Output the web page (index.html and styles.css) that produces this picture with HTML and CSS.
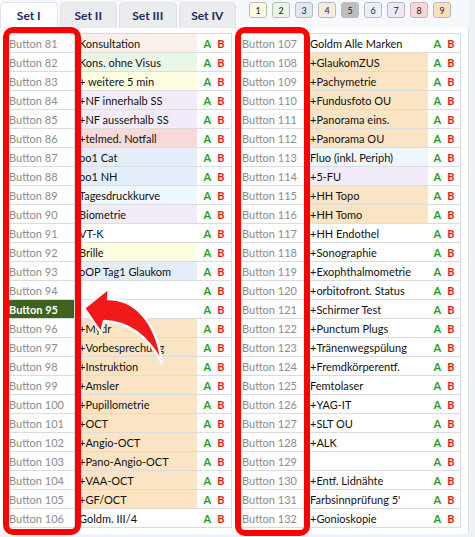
FILE: index.html
```html
<!DOCTYPE html>
<html lang="de">
<head>
<meta charset="utf-8">
<title>Buttons</title>
<link rel="stylesheet" href="styles.css">
</head>
<body>
<div class="app">
  <div class="col col-left">
    <div class="tabs">
      <div class="tab active">Set I</div>
      <div class="tab">Set II</div>
      <div class="tab">Set III</div>
      <div class="tab">Set IV</div>
    </div>
    <div class="panel panel-left">
      <div class="grid grid-left">
        <div class="row"><div class="c1">Button 81</div><div class="c2 bg-peach">Konsultation</div><div class="c3"><span class="a">A</span><span class="b">B</span></div></div>
        <div class="row"><div class="c1">Button 82</div><div class="c2 bg-green">Kons. ohne Visus</div><div class="c3"><span class="a">A</span><span class="b">B</span></div></div>
        <div class="row"><div class="c1">Button 83</div><div class="c2 bg-yellow">+ weitere 5 min</div><div class="c3"><span class="a">A</span><span class="b">B</span></div></div>
        <div class="row"><div class="c1">Button 84</div><div class="c2 bg-lav">+NF innerhalb SS</div><div class="c3"><span class="a">A</span><span class="b">B</span></div></div>
        <div class="row"><div class="c1">Button 85</div><div class="c2 bg-lav">+NF ausserhalb SS</div><div class="c3"><span class="a">A</span><span class="b">B</span></div></div>
        <div class="row"><div class="c1">Button 86</div><div class="c2 bg-pink">+telmed. Notfall</div><div class="c3"><span class="a">A</span><span class="b">B</span></div></div>
        <div class="row"><div class="c1">Button 87</div><div class="c2 bg-blue">oo1 Cat</div><div class="c3"><span class="a">A</span><span class="b">B</span></div></div>
        <div class="row"><div class="c1">Button 88</div><div class="c2 bg-blue">oo1 NH</div><div class="c3"><span class="a">A</span><span class="b">B</span></div></div>
        <div class="row"><div class="c1">Button 89</div><div class="c2 bg-sky">Tagesdruckkurve</div><div class="c3"><span class="a">A</span><span class="b">B</span></div></div>
        <div class="row"><div class="c1">Button 90</div><div class="c2 bg-lav">Biometrie</div><div class="c3"><span class="a">A</span><span class="b">B</span></div></div>
        <div class="row"><div class="c1">Button 91</div><div class="c2">VT-K</div><div class="c3"><span class="a">A</span><span class="b">B</span></div></div>
        <div class="row"><div class="c1">Button 92</div><div class="c2 bg-yellow">Brille</div><div class="c3"><span class="a">A</span><span class="b">B</span></div></div>
        <div class="row"><div class="c1">Button 93</div><div class="c2 bg-blue">oOP Tag1 Glaukom</div><div class="c3"><span class="a">A</span><span class="b">B</span></div></div>
        <div class="row"><div class="c1">Button 94</div><div class="c2"></div><div class="c3"><span class="a">A</span><span class="b">B</span></div></div>
        <div class="row"><div class="c1 selected">Button 95</div><div class="c2"></div><div class="c3"><span class="a">A</span><span class="b">B</span></div></div>
        <div class="row"><div class="c1">Button 96</div><div class="c2 bg-orange">+Mydr</div><div class="c3"><span class="a">A</span><span class="b">B</span></div></div>
        <div class="row"><div class="c1">Button 97</div><div class="c2 bg-orange">+Vorbesprechung</div><div class="c3"><span class="a">A</span><span class="b">B</span></div></div>
        <div class="row"><div class="c1">Button 98</div><div class="c2 bg-orange">+Instruktion</div><div class="c3"><span class="a">A</span><span class="b">B</span></div></div>
        <div class="row"><div class="c1">Button 99</div><div class="c2 bg-orange">+Amsler</div><div class="c3"><span class="a">A</span><span class="b">B</span></div></div>
        <div class="row"><div class="c1">Button 100</div><div class="c2 bg-orange">+Pupillometrie</div><div class="c3"><span class="a">A</span><span class="b">B</span></div></div>
        <div class="row"><div class="c1">Button 101</div><div class="c2 bg-orange">+OCT</div><div class="c3"><span class="a">A</span><span class="b">B</span></div></div>
        <div class="row"><div class="c1">Button 102</div><div class="c2 bg-orange">+Angio-OCT</div><div class="c3"><span class="a">A</span><span class="b">B</span></div></div>
        <div class="row"><div class="c1">Button 103</div><div class="c2 bg-orange">+Pano-Angio-OCT</div><div class="c3"><span class="a">A</span><span class="b">B</span></div></div>
        <div class="row"><div class="c1">Button 104</div><div class="c2 bg-orange">+VAA-OCT</div><div class="c3"><span class="a">A</span><span class="b">B</span></div></div>
        <div class="row"><div class="c1">Button 105</div><div class="c2 bg-orange">+GF/OCT</div><div class="c3"><span class="a">A</span><span class="b">B</span></div></div>
        <div class="row"><div class="c1">Button 106</div><div class="c2">Goldm. III/4</div><div class="c3"><span class="a">A</span><span class="b">B</span></div></div>
      </div>
    </div>
  </div>
  <div class="col col-right">
    <div class="numbers">
      <div class="num n1">1</div>
      <div class="num n2">2</div>
      <div class="num n3">3</div>
      <div class="num n4">4</div>
      <div class="num n5">5</div>
      <div class="num n6">6</div>
      <div class="num n7">7</div>
      <div class="num n8">8</div>
      <div class="num n9">9</div>
    </div>
    <div class="panel panel-right">
      <div class="grid grid-right">
        <div class="row"><div class="c1">Button 107</div><div class="c2">Goldm Alle Marken</div><div class="c3"><span class="a">A</span><span class="b">B</span></div></div>
        <div class="row"><div class="c1">Button 108</div><div class="c2 bg-orange">+GlaukomZUS</div><div class="c3"><span class="a">A</span><span class="b">B</span></div></div>
        <div class="row"><div class="c1">Button 109</div><div class="c2 bg-orange">+Pachymetrie</div><div class="c3"><span class="a">A</span><span class="b">B</span></div></div>
        <div class="row"><div class="c1">Button 110</div><div class="c2 bg-orange">+Fundusfoto OU</div><div class="c3"><span class="a">A</span><span class="b">B</span></div></div>
        <div class="row"><div class="c1">Button 111</div><div class="c2 bg-orange">+Panorama eins.</div><div class="c3"><span class="a">A</span><span class="b">B</span></div></div>
        <div class="row"><div class="c1">Button 112</div><div class="c2 bg-orange">+Panorama OU</div><div class="c3"><span class="a">A</span><span class="b">B</span></div></div>
        <div class="row"><div class="c1">Button 113</div><div class="c2 bg-sky">Fluo (inkl. Periph)</div><div class="c3"><span class="a">A</span><span class="b">B</span></div></div>
        <div class="row"><div class="c1">Button 114</div><div class="c2 bg-lav">+5-FU</div><div class="c3"><span class="a">A</span><span class="b">B</span></div></div>
        <div class="row"><div class="c1">Button 115</div><div class="c2 bg-orange">+HH Topo</div><div class="c3"><span class="a">A</span><span class="b">B</span></div></div>
        <div class="row"><div class="c1">Button 116</div><div class="c2 bg-orange">+HH Tomo</div><div class="c3"><span class="a">A</span><span class="b">B</span></div></div>
        <div class="row"><div class="c1">Button 117</div><div class="c2">+HH Endothel</div><div class="c3"><span class="a">A</span><span class="b">B</span></div></div>
        <div class="row"><div class="c1">Button 118</div><div class="c2">+Sonographie</div><div class="c3"><span class="a">A</span><span class="b">B</span></div></div>
        <div class="row"><div class="c1">Button 119</div><div class="c2">+Exophthalmometrie</div><div class="c3"><span class="a">A</span><span class="b">B</span></div></div>
        <div class="row"><div class="c1">Button 120</div><div class="c2">+orbitofront. Status</div><div class="c3"><span class="a">A</span><span class="b">B</span></div></div>
        <div class="row"><div class="c1">Button 121</div><div class="c2">+Schirmer Test</div><div class="c3"><span class="a">A</span><span class="b">B</span></div></div>
        <div class="row"><div class="c1">Button 122</div><div class="c2">+Punctum Plugs</div><div class="c3"><span class="a">A</span><span class="b">B</span></div></div>
        <div class="row"><div class="c1">Button 123</div><div class="c2">+Tränenwegspülung</div><div class="c3"><span class="a">A</span><span class="b">B</span></div></div>
        <div class="row"><div class="c1">Button 124</div><div class="c2">+Fremdkörperentf.</div><div class="c3"><span class="a">A</span><span class="b">B</span></div></div>
        <div class="row"><div class="c1">Button 125</div><div class="c2">Femtolaser</div><div class="c3"><span class="a">A</span><span class="b">B</span></div></div>
        <div class="row"><div class="c1">Button 126</div><div class="c2">+YAG-IT</div><div class="c3"><span class="a">A</span><span class="b">B</span></div></div>
        <div class="row"><div class="c1">Button 127</div><div class="c2">+SLT OU</div><div class="c3"><span class="a">A</span><span class="b">B</span></div></div>
        <div class="row"><div class="c1">Button 128</div><div class="c2">+ALK</div><div class="c3"><span class="a">A</span><span class="b">B</span></div></div>
        <div class="row"><div class="c1">Button 129</div><div class="c2"></div><div class="c3"><span class="a">A</span><span class="b">B</span></div></div>
        <div class="row"><div class="c1">Button 130</div><div class="c2">+Entf. Lidnähte</div><div class="c3"><span class="a">A</span><span class="b">B</span></div></div>
        <div class="row"><div class="c1">Button 131</div><div class="c2">Farbsinnprüfung 5'</div><div class="c3"><span class="a">A</span><span class="b">B</span></div></div>
        <div class="row"><div class="c1">Button 132</div><div class="c2">+Gonioskopie</div><div class="c3"><span class="a">A</span><span class="b">B</span></div></div>
      </div>
    </div>
  </div>
</div>
<div class="highlight highlight-left"></div>
<div class="highlight highlight-right"></div>
<svg class="arrow" width="475" height="537" viewBox="0 0 475 537" xmlns="http://www.w3.org/2000/svg">
  <path d="M84 308 L109 288 L108 299 C134 299 156 320 162 363 C150 340 132 322 104 321 L101 333 Z" fill="#f01818" stroke="#ffffff" stroke-width="2.5" stroke-linejoin="round"/>
</svg>
</body>
</html>
```

FILE: styles.css
```css
* { box-sizing: border-box; }

html, body {
  margin: 0;
  padding: 0;
}

body {
  width: 475px;
  height: 537px;
  overflow: hidden;
  position: relative;
  background: #eef2f8;
  font-family: Lato, "Liberation Sans", sans-serif;
  color: #111;
}

.app {
  display: flex;
  align-items: flex-start;
}

.col-left { width: 236px; }
.col-right { width: 233px; }

.tabs {
  display: flex;
  gap: 2px;
  height: 28px;
  padding-top: 2px;
  background: #f6f8fb;
}

.tab {
  width: 58px;
  display: flex;
  align-items: center;
  justify-content: center;
  border: 1px solid #e0e3e8;
  border-bottom: none;
  border-radius: 5px 5px 0 0;
  background: #eaecef;
  color: #1d2b58;
  font-weight: bold;
  font-size: 12px;
}

.tab.active { background: #ffffff; }

.numbers {
  display: flex;
  gap: 5px;
  height: 28px;
  padding: 2px 0 0 13px;
  background: #f6f8fb;
}

.num {
  width: 18px;
  height: 16px;
  border: 1px solid #b8bcc2;
  border-radius: 3px;
  display: flex;
  align-items: center;
  justify-content: center;
  font-size: 9px;
  color: #222;
}

.n1 { background: #fdfbdc; }
.n2 { background: #e7f6e2; }
.n3 { background: #dde8f5; }
.n4 { background: #fbe9de; }
.n5 { background: #bdbdbd; }
.n6 { background: #e5f2fb; }
.n7 { background: #efe8f8; }
.n8 { background: #fad6d6; }
.n9 { background: #fbdfb8; }

.panel {
  background: #ffffff;
  height: 506px;
}

.panel-left { padding: 5px 4px 0 5px; }

.panel-right {
  padding: 5px 7px 0 2px;
  border-right: 1px solid #dde3ec;
}

.grid {
  border: 1px solid #dcdcdc;
  border-bottom: none;
}

.row {
  display: grid;
  height: 19px;
  border-bottom: 1px solid #dcdcdc;
}

.grid-left .row { grid-template-columns: 69px 122px 1fr; }
.grid-right .row { grid-template-columns: 67px 122px 1fr; }

.c1, .c2, .c3 {
  display: flex;
  align-items: center;
  white-space: nowrap;
  overflow: hidden;
}

.c1 {
  padding-left: 3px;
  border-right: 1px solid #dcdcdc;
  color: #8c8c8c;
  font-size: 11px;
}

.c1.selected {
  background: #3e6321;
  color: #ffffff;
  font-weight: bold;
}

.c2 {
  padding-left: 4px;
  font-size: 11px;
  color: #111;
}

.c3 {
  justify-content: center;
  gap: 6px;
  font-size: 11px;
  font-weight: bold;
}

.a { color: #1f9e1f; }
.b { color: #ee1c1c; }

.bg-peach { background: #fbefe9; }
.bg-green { background: #ebf7e6; }
.bg-yellow { background: #fdfde2; }
.bg-lav { background: #f2ecfa; }
.bg-pink { background: #f8d9d7; }
.bg-blue { background: #e3eefa; }
.bg-sky { background: #eef7fc; }
.bg-orange { background: #fbe4c4; }

.highlight {
  position: absolute;
  border: 6px solid #ff0000;
  border-radius: 10px;
  pointer-events: none;
}

.highlight-left {
  left: 3px;
  top: 27px;
  width: 78px;
  height: 508px;
}

.highlight-right {
  left: 235px;
  top: 27px;
  width: 75px;
  height: 509px;
}

.arrow {
  position: absolute;
  left: 0;
  top: 0;
  pointer-events: none;
}
```
